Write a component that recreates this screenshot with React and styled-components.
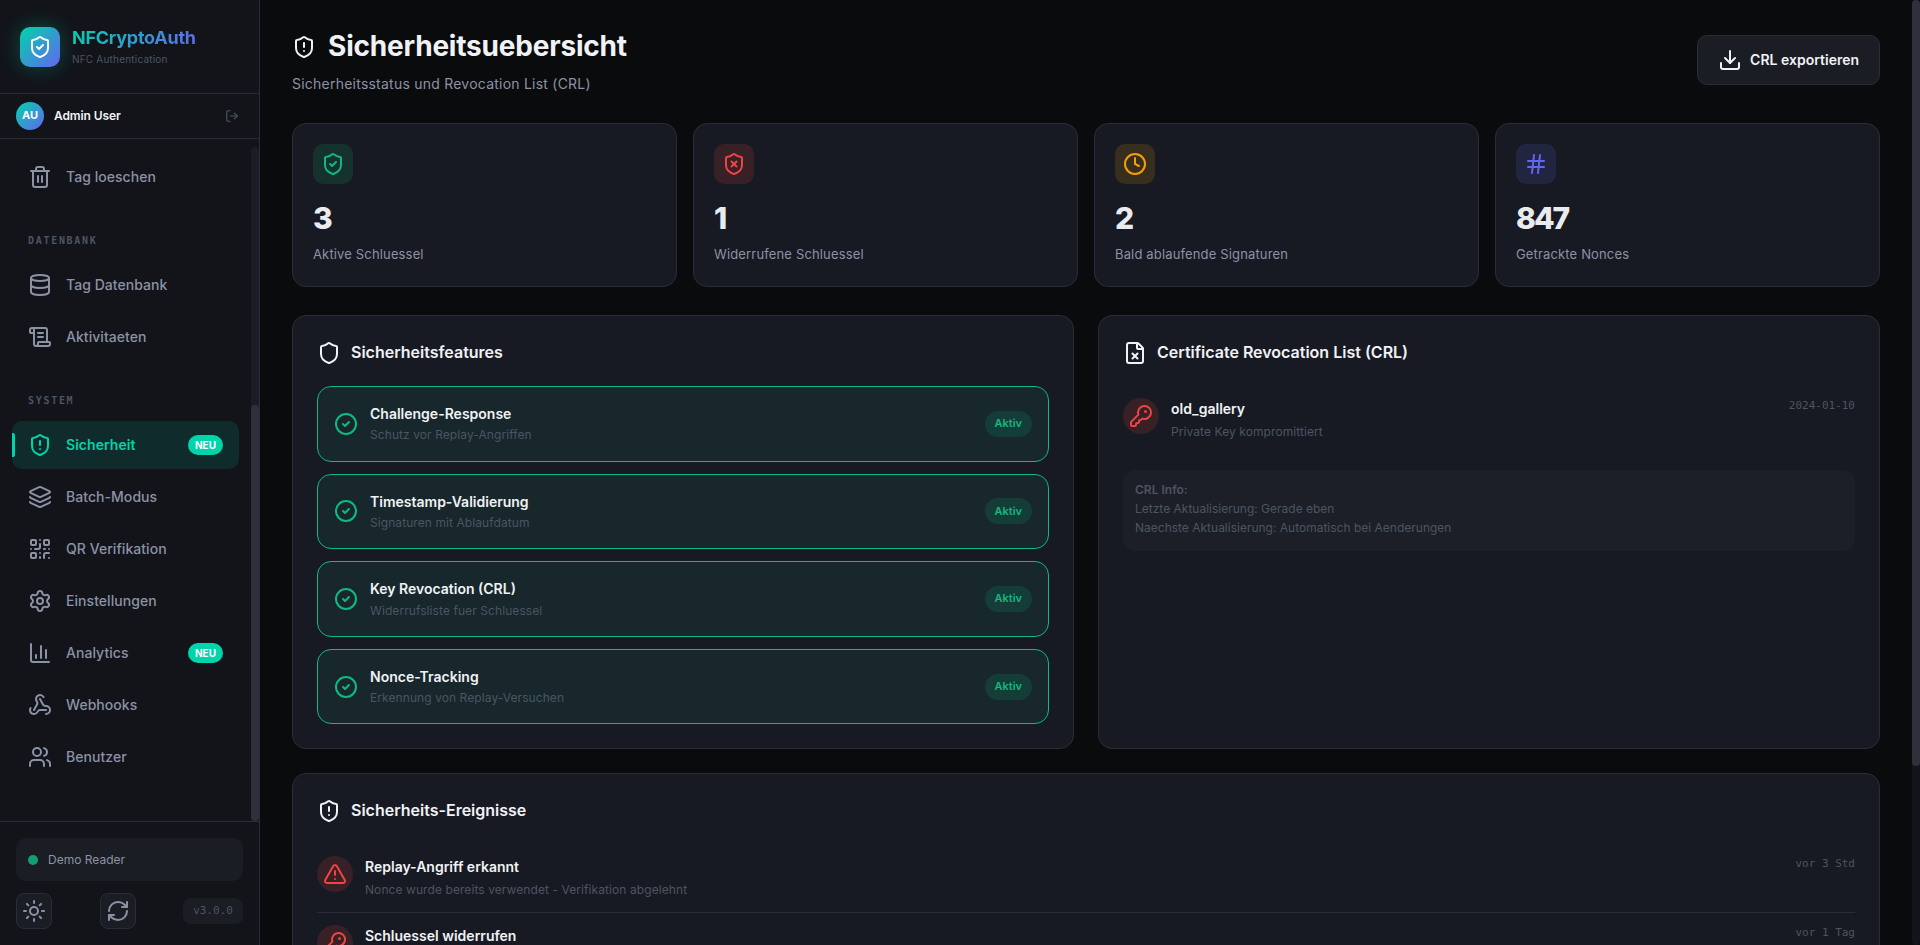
import styled, { createGlobalStyle } from "styled-components";
import {
  Trash2,
  Database,
  ScrollText,
  ShieldAlert,
  Layers,
  QrCode,
  Settings,
  ChartColumn,
  Webhook,
  Users,
  Sun,
  RefreshCw,
  LogOut,
  Download,
  ShieldCheck,
  ShieldX,
  Clock,
  Hash,
  Shield,
  FileX,
  CircleCheck,
  KeyRound,
  TriangleAlert,
} from "lucide-react";

const ACCENT = "#00d4aa";
const INDIGO = "#6366f1";
const GREEN = "#10b981";
const RED = "#ef4444";
const AMBER = "#f59e0b";
const TEXT = "#f0f2f5";
const MUTED = "#8b92a5";
const DIM = "#4b5563";
const BORDER = "#2a2d37";
const CARD = "#171a22";
const SANS = `"Inter", "Noto Sans", sans-serif`;
const MONO = `"DejaVu Sans Mono", "Liberation Mono", monospace`;

const GlobalStyle = createGlobalStyle`
  * {
    box-sizing: border-box;
  }

  html,
  body {
    margin: 0;
    height: 100%;
    overflow: hidden;
    background: #0a0b0d;
    font-family: ${SANS};
    line-height: 1.6;
    color: ${TEXT};
  }
`;

const Layout = styled.div`
  display: flex;
  height: 100vh;
`;

const Sidebar = styled.aside`
  width: 260px;
  flex-shrink: 0;
  display: flex;
  flex-direction: column;
  background: #12141a;
  border-right: 1px solid ${BORDER};
`;

const Brand = styled.div`
  height: 94px;
  flex-shrink: 0;
  display: flex;
  align-items: center;
  gap: 12px;
  padding: 0 20px;
  border-bottom: 1px solid ${BORDER};
`;

const BrandLogo = styled.div`
  width: 40px;
  height: 40px;
  display: flex;
  align-items: center;
  justify-content: center;
  border-radius: 10px;
  color: #fff;
  background: linear-gradient(135deg, ${ACCENT}, ${INDIGO});
  box-shadow: 0 0 20px rgba(0, 212, 170, 0.3);
`;

const BrandName = styled.div`
  font-size: 18px;
  font-weight: 700;
  line-height: 25px;
  letter-spacing: -0.25px;
  color: transparent;
  background: linear-gradient(135deg, ${ACCENT}, ${INDIGO});
  background-clip: text;
  -webkit-background-clip: text;
`;

const BrandSub = styled.div`
  margin-top: 1px;
  font-size: 10px;
  line-height: 17px;
  letter-spacing: 0.2px;
  color: ${DIM};
`;

const UserRow = styled.div`
  height: 45px;
  flex-shrink: 0;
  display: flex;
  align-items: center;
  gap: 10px;
  padding: 0 20px 0 16px;
  border-bottom: 1px solid ${BORDER};
  color: ${DIM};
`;

const Avatar = styled.div`
  width: 28px;
  height: 28px;
  display: flex;
  align-items: center;
  justify-content: center;
  border-radius: 50%;
  font-size: 11px;
  font-weight: 700;
  color: #fff;
  background: linear-gradient(135deg, ${ACCENT}, ${INDIGO});
`;

const UserName = styled.span`
  flex: 1;
  font-size: 12px;
  font-weight: 600;
  letter-spacing: -0.1px;
  color: ${TEXT};
`;

const NavArea = styled.div`
  flex: 1;
  min-height: 0;
  display: flex;
`;

const NavList = styled.nav`
  flex: 1;
  min-width: 0;
  padding: 14px 12px 0;
`;

const ScrollRail = styled.div`
  width: 8px;
  flex-shrink: 0;
  display: flex;
  margin-top: ${({ $top }) => $top}px;
  padding-top: ${({ $offset }) => $offset}px;
  border-radius: 4px;
  background: ${({ $track }) => $track};
`;

const ScrollThumb = styled.div`
  flex: 1;
  border-radius: 4px;
  background: #2e313c;
`;

const PageThumb = styled(ScrollThumb)`
  flex: none;
  width: 8px;
  height: 766px;
`;

const NavSection = styled.div`
  display: flex;
  flex-direction: column;
  gap: 4px;

  & + & {
    margin-top: 31px;
  }
`;

const NavLabel = styled.div`
  height: 18px;
  margin-bottom: 7px;
  padding-left: 16px;
  font-family: ${MONO};
  font-size: 10px;
  font-weight: 700;
  line-height: 18px;
  letter-spacing: 1.7px;
  color: ${DIM};
`;

const NavItem = styled.div`
  position: relative;
  height: 48px;
  flex-shrink: 0;
  display: flex;
  align-items: center;
  gap: 14px;
  padding: 0 16px;
  border-radius: 10px;
  font-size: 14px;
  font-weight: ${({ $active }) => ($active ? 600 : 500)};
  letter-spacing: 0.05px;
  color: ${({ $active }) => ($active ? ACCENT : MUTED)};
  background: ${({ $active }) =>
    $active ? "rgba(0, 212, 170, 0.12)" : "transparent"};

  &::before {
    content: "";
    position: absolute;
    left: 0;
    top: 12px;
    width: 3px;
    height: 24px;
    display: ${({ $active }) => ($active ? "block" : "none")};
    background: ${ACCENT};
    border-radius: 0 2px 2px 0;
  }
`;

const NavText = styled.span`
  flex: 1;
`;

const NewBadge = styled.span`
  width: 35px;
  height: 20px;
  display: flex;
  align-items: center;
  justify-content: center;
  border-radius: 10px;
  font-size: 10px;
  font-weight: 700;
  color: #fff;
  background: ${ACCENT};
`;

const SidebarFooter = styled.div`
  flex-shrink: 0;
  display: flex;
  flex-direction: column;
  gap: 12px;
  padding: 16px;
  border-top: 1px solid ${BORDER};
`;

const ReaderStatus = styled.div`
  height: 43px;
  display: flex;
  align-items: center;
  gap: 10px;
  padding: 0 12px;
  border-radius: 10px;
  font-size: 12px;
  color: ${MUTED};
  background: #1a1d24;
`;

const StatusDot = styled.span`
  width: 10px;
  height: 10px;
  border-radius: 50%;
  background: #149e70;
`;

const FooterTools = styled.div`
  display: flex;
  align-items: center;
  justify-content: space-between;
`;

const ToolButton = styled.div`
  width: 36px;
  height: 36px;
  display: flex;
  align-items: center;
  justify-content: center;
  border-radius: 8px;
  color: ${MUTED};
  background: #1a1d24;
  border: 1px solid ${BORDER};
`;

const Version = styled.span`
  width: 60px;
  height: 26px;
  display: flex;
  align-items: center;
  justify-content: center;
  border-radius: 8px;
  font-family: ${MONO};
  font-size: 11px;
  color: ${DIM};
  background: #1a1d24;
`;

const Main = styled.main`
  flex: 1;
  min-width: 0;
  overflow: hidden;
  padding: 24px 32px;
`;

const PageHeader = styled.header`
  display: flex;
  align-items: center;
  justify-content: space-between;
  margin-bottom: 28px;
`;

const PageTitle = styled.h1`
  margin: 0;
  display: flex;
  align-items: center;
  gap: 12px;
  font-size: 28px;
  font-weight: 700;
  line-height: 45px;
  letter-spacing: -0.2px;
`;

const PageSub = styled.p`
  margin: 4px 0 0;
  font-size: 14px;
  letter-spacing: 0.23px;
  color: ${MUTED};
`;

const ExportButton = styled.button`
  height: 50px;
  display: flex;
  align-items: center;
  gap: 8px;
  padding: 0 20px;
  border-radius: 10px;
  border: 1px solid ${BORDER};
  font-family: ${SANS};
  font-size: 14px;
  font-weight: 600;
  color: ${TEXT};
  background: #1a1d24;
`;

const StatGrid = styled.section`
  display: grid;
  grid-template-columns: repeat(4, 1fr);
  gap: 16px;
  margin-bottom: 28px;
`;

const StatCard = styled.div`
  height: 164px;
  padding: 20px;
  border-radius: 14px;
  background: ${CARD};
  border: 1px solid ${BORDER};
`;

const StatIcon = styled.div`
  width: 40px;
  height: 40px;
  display: flex;
  align-items: center;
  justify-content: center;
  border-radius: 10px;
  color: ${({ $color }) => $color};
  background: ${({ $tint }) => $tint};
`;

const StatValue = styled.div`
  margin: 15px 0 7px;
  font-size: 30px;
  font-weight: 800;
  line-height: 38px;
  letter-spacing: -2px;
  color: #e9ebef;
`;

const StatLabel = styled.div`
  font-size: 13px;
  letter-spacing: 0.15px;
  color: ${MUTED};
`;

const PanelGrid = styled.section`
  display: grid;
  grid-template-columns: 1fr 1fr;
  gap: 24px;
  margin-bottom: 24px;
`;

const Panel = styled.div`
  padding: 24px;
  border-radius: 14px;
  background: ${CARD};
  border: 1px solid ${BORDER};
`;

const PanelTitle = styled.h2`
  margin: 0 0 20px;
  display: flex;
  align-items: center;
  gap: 10px;
  font-size: 16px;
  font-weight: 600;
  line-height: 25.6px;
`;

const FeatureList = styled.div`
  display: flex;
  flex-direction: column;
  gap: 12px;
`;

const FeatureRow = styled.div`
  display: flex;
  align-items: center;
  gap: 12px;
  padding: 16px;
  border-radius: 14px;
  color: ${GREEN};
  background: #17272b;
  border: 1px solid ${GREEN};
`;

const RowBody = styled.div`
  flex: 1;
  min-width: 0;
`;

const RowName = styled.div`
  font-size: 14px;
  font-weight: 600;
  line-height: 22.4px;
  color: ${TEXT};
`;

const RowSub = styled.div`
  font-size: 12px;
  line-height: 19.2px;
  letter-spacing: 0.08px;
  color: ${DIM};
`;

const LogSub = styled(RowSub)`
  margin-top: 2px;
`;

const ActiveBadge = styled.span`
  height: 26px;
  padding: 0 10px;
  display: flex;
  align-items: center;
  border-radius: 13px;
  font-size: 11px;
  font-weight: 600;
  color: ${GREEN};
  background: rgba(16, 185, 129, 0.15);
`;

const LogRow = styled.div`
  display: flex;
  align-items: flex-start;
  gap: 12px;
  padding: 12px 0;

  & + & {
    border-top: 1px solid ${BORDER};
  }
`;

const LogIcon = styled.div`
  width: 36px;
  height: 36px;
  flex-shrink: 0;
  display: flex;
  align-items: center;
  justify-content: center;
  border-radius: 50%;
  color: ${RED};
  background: rgba(239, 68, 68, 0.15);
`;

const LogTime = styled.span`
  font-family: ${MONO};
  font-size: 11px;
  line-height: 16px;
  color: ${DIM};
`;

const InfoBox = styled.div`
  margin-top: 16px;
  padding: 10px 12px 14px;
  border-radius: 12px;
  font-size: 12px;
  line-height: 19.2px;
  color: ${DIM};
  background: #1c1f27;
`;

const InfoHead = styled.div`
  font-weight: 600;
`;

const stats = [
  { icon: ShieldCheck, color: GREEN, tint: "rgba(16, 185, 129, 0.15)", value: "3", label: "Aktive Schluessel" },
  { icon: ShieldX, color: RED, tint: "rgba(239, 68, 68, 0.15)", value: "1", label: "Widerrufene Schluessel" },
  { icon: Clock, color: AMBER, tint: "rgba(245, 158, 11, 0.15)", value: "2", label: "Bald ablaufende Signaturen" },
  { icon: Hash, color: INDIGO, tint: "rgba(99, 102, 241, 0.15)", value: "847", label: "Getrackte Nonces" },
];

const features = [
  { name: "Challenge-Response", sub: "Schutz vor Replay-Angriffen" },
  { name: "Timestamp-Validierung", sub: "Signaturen mit Ablaufdatum" },
  { name: "Key Revocation (CRL)", sub: "Widerrufsliste fuer Schluessel" },
  { name: "Nonce-Tracking", sub: "Erkennung von Replay-Versuchen" },
];

const events = [
  { icon: TriangleAlert, name: "Replay-Angriff erkannt", sub: "Nonce wurde bereits verwendet - Verifikation abgelehnt", time: "vor 3 Std" },
  { icon: KeyRound, name: "Schluessel widerrufen", time: "vor 1 Tag" },
];

const NavEntry = ({ icon: Icon, label, active, isNew }) => (
  <NavItem $active={active}>
    <Icon size={24} />
    <NavText>{label}</NavText>
    {isNew && <NewBadge>NEU</NewBadge>}
  </NavItem>
);

const App = () => (
  <Layout>
    <GlobalStyle />
    <Sidebar>
      <Brand>
        <BrandLogo>
          <ShieldCheck size={24} />
        </BrandLogo>
        <div>
          <BrandName>NFCryptoAuth</BrandName>
          <BrandSub>NFC Authentication</BrandSub>
        </div>
      </Brand>

      <UserRow>
        <Avatar>AU</Avatar>
        <UserName>Admin User</UserName>
        <LogOut size={14} />
      </UserRow>

      <NavArea>
        <NavList>
          <NavSection>
            <NavEntry icon={Trash2} label="Tag loeschen" />
          </NavSection>
          <NavSection>
            <NavLabel>DATENBANK</NavLabel>
            <NavEntry icon={Database} label="Tag Datenbank" />
            <NavEntry icon={ScrollText} label="Aktivitaeten" />
          </NavSection>
          <NavSection>
            <NavLabel>SYSTEM</NavLabel>
            <NavEntry icon={ShieldAlert} label="Sicherheit" active isNew />
            <NavEntry icon={Layers} label="Batch-Modus" />
            <NavEntry icon={QrCode} label="QR Verifikation" />
            <NavEntry icon={Settings} label="Einstellungen" />
            <NavEntry icon={ChartColumn} label="Analytics" isNew />
            <NavEntry icon={Webhook} label="Webhooks" />
            <NavEntry icon={Users} label="Benutzer" />
          </NavSection>
        </NavList>
        <ScrollRail $top={8} $offset={258} $track="#1a1d24">
          <ScrollThumb />
        </ScrollRail>
      </NavArea>

      <SidebarFooter>
        <ReaderStatus>
          <StatusDot />
          Demo Reader
        </ReaderStatus>
        <FooterTools>
          <ToolButton>
            <Sun size={24} />
          </ToolButton>
          <ToolButton>
            <RefreshCw size={24} />
          </ToolButton>
          <Version>v3.0.0</Version>
        </FooterTools>
      </SidebarFooter>
    </Sidebar>

    <Main>
      <PageHeader>
        <div>
          <PageTitle>
            <ShieldAlert size={24} />
            Sicherheitsuebersicht
          </PageTitle>
          <PageSub>Sicherheitsstatus und Revocation List (CRL)</PageSub>
        </div>
        <ExportButton>
          <Download size={24} />
          CRL exportieren
        </ExportButton>
      </PageHeader>

      <StatGrid>
        {stats.map(({ icon: Icon, color, tint, value, label }) => (
          <StatCard key={label}>
            <StatIcon $color={color} $tint={tint}>
              <Icon size={24} />
            </StatIcon>
            <StatValue>{value}</StatValue>
            <StatLabel>{label}</StatLabel>
          </StatCard>
        ))}
      </StatGrid>

      <PanelGrid>
        <Panel>
          <PanelTitle>
            <Shield size={24} />
            Sicherheitsfeatures
          </PanelTitle>
          <FeatureList>
            {features.map(({ name, sub }) => (
              <FeatureRow key={name}>
                <CircleCheck size={24} />
                <RowBody>
                  <RowName>{name}</RowName>
                  <RowSub>{sub}</RowSub>
                </RowBody>
                <ActiveBadge>Aktiv</ActiveBadge>
              </FeatureRow>
            ))}
          </FeatureList>
        </Panel>

        <Panel>
          <PanelTitle>
            <FileX size={24} />
            Certificate Revocation List (CRL)
          </PanelTitle>
          <LogRow>
            <LogIcon>
              <KeyRound size={24} />
            </LogIcon>
            <RowBody>
              <RowName>old_gallery</RowName>
              <LogSub>Private Key kompromittiert</LogSub>
            </RowBody>
            <LogTime>2024-01-10</LogTime>
          </LogRow>
          <InfoBox>
            <InfoHead>CRL Info:</InfoHead>
            <div>Letzte Aktualisierung: Gerade eben</div>
            <div>Naechste Aktualisierung: Automatisch bei Aenderungen</div>
          </InfoBox>
        </Panel>
      </PanelGrid>

      <Panel>
        <PanelTitle>
          <ShieldAlert size={24} />
          Sicherheits-Ereignisse
        </PanelTitle>
        {events.map(({ icon: Icon, name, sub, time }) => (
          <LogRow key={name}>
            <LogIcon>
              <Icon size={24} />
            </LogIcon>
            <RowBody>
              <RowName>{name}</RowName>
              {sub && <LogSub>{sub}</LogSub>}
            </RowBody>
            <LogTime>{time}</LogTime>
          </LogRow>
        ))}
      </Panel>
    </Main>

    <ScrollRail $top={0} $offset={0} $track="#12141a">
      <PageThumb />
    </ScrollRail>
  </Layout>
);

export default App;
